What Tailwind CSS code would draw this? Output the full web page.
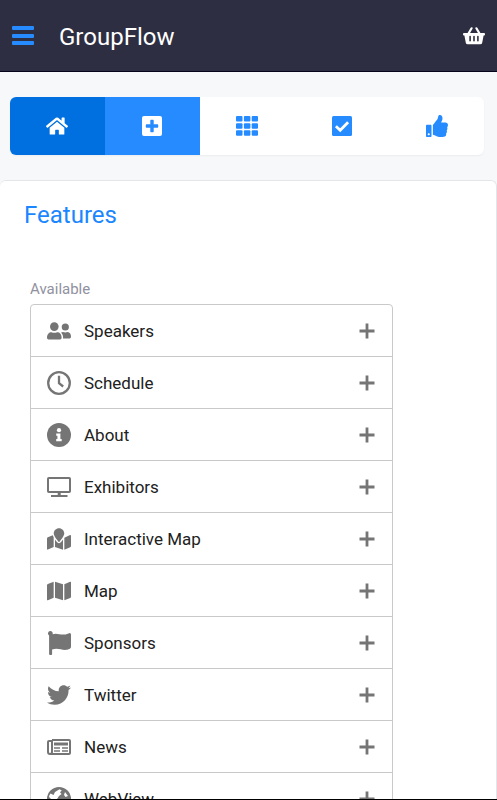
<!DOCTYPE html>
<html lang="en">
<head>
  <meta charset="UTF-8" />
  <meta name="viewport" content="width=device-width, initial-scale=1.0"/>
  <title>GroupFlow</title>
  <script src="https://cdn.jsdelivr.net/npm/@tailwindcss/browser@4"></script>
</head>
<body class="h-screen flex flex-col overflow-hidden bg-[#f6f8fa] border-b border-black font-['Roboto',sans-serif] text-[#212121]">

  <!-- Header -->
  <header class="flex items-center shrink-0 h-18 px-3 bg-[#2e2e42] border-b border-[#05041a]">
    <button type="button" aria-label="Menu" class="text-[#268bff]">
      <svg class="w-[22px] h-5" viewBox="0 0 22 20" fill="currentColor"><rect y="0" width="22" height="4" rx="1"/><rect y="8" width="22" height="4" rx="1"/><rect y="15" width="22" height="4" rx="1"/></svg>
    </button>
    <h1 class="ml-[25px] pt-0.5 text-2xl text-white">GroupFlow</h1>
    <a href="#cart" aria-label="Basket" class="ml-auto text-white">
      <svg class="w-[22px] h-5" viewBox="0 0 22 20" fill="currentColor">
        <path fill-rule="evenodd" d="M1 7h20q1 0 1 1v.6q0 .9-1 .9h-.4l-1.4 7.2q-.3 1.6-2 1.6H4.8q-1.7 0-2-1.6L1.4 9.5H1q-1 0-1-.9V8q0-1 1-1zM6.300 10.600v4.200q0 .8.8.8t.8-.8v-4.200q0-.8-.8-.8t-.8.8zM10.200 10.600v4.200q0 .8.8.8t.8-.8v-4.200q0-.8-.8-.8t-.8.8zM14.100 10.600v4.200q0 .8.8.8t.8-.8v-4.200q0-.8-.8-.8t-.8.8z"/>
        <path d="M5.500 7.500L8.600 2.300M16.500 7.500L13.400 2.300" stroke="currentColor" stroke-width="2.200" stroke-linecap="round"/>
      </svg>
    </a>
  </header>

  <!-- Steps -->
  <nav class="flex shrink-0 h-[58px] mt-[25px] ml-2.5 mr-[13px] rounded-md overflow-hidden bg-white text-[#268bff] shadow-xs">
    <a href="#home" aria-label="Home" class="flex-1 flex items-center justify-center bg-[#0070e0] text-white">
      <svg class="w-[22px] h-5" viewBox="0 0 576 512" fill="currentColor"><path d="M280.370 148.260L96 300.110V464a16 16 0 0 0 16 16l112.060-.29a16 16 0 0 0 15.920-16V368a16 16 0 0 1 16-16h64a16 16 0 0 1 16 16v95.640a16 16 0 0 0 16 16.050L464 480a16 16 0 0 0 16-16V300L295.670 148.260a12.190 12.190 0 0 0-15.300 0zM571.600 251.470L488 182.560V44.050a12 12 0 0 0-12-12h-56a12 12 0 0 0-12 12v72.610L318.470 43a48 48 0 0 0-61 0L4.340 251.470a12 12 0 0 0-1.600 16.900l25.500 31A12 12 0 0 0 45.150 301l235.220-193.740a12.190 12.190 0 0 1 15.300 0L530.900 301a12 12 0 0 0 16.900-1.600l25.500-31a12 12 0 0 0-1.700-16.930z"/></svg>
    </a>
    <a href="#features" aria-label="Features" class="flex-1 flex items-center justify-center bg-[#268bff] text-white">
      <svg class="w-5 h-5" viewBox="0 0 20 20" fill="currentColor"><path fill-rule="evenodd" d="M2 0h16q2 0 2 2v16q0 2-2 2H2q-2 0-2-2V2q0-2 2-2zM8.300 4.500v3.800H4.500q-.7 0-.7.7v2q0 .7.7.7h3.800v3.800q0 .7.7.7h2q.7 0 .7-.7v-3.800h3.800q.7 0 .7-.7V9q0-.7-.7-.7h-3.800V4.500q0-.7-.7-.7H9q-.7 0-.7.7z"/></svg>
    </a>
    <a href="#modules" aria-label="Modules" class="flex-1 flex items-center justify-center">
      <svg class="w-[22px] h-5" viewBox="0 0 22 20" fill="currentColor">
        <rect width="6.500" height="5.500" rx="1"/><rect x="7.900" width="6.500" height="5.500" rx="1"/><rect x="15.700" width="6.300" height="5.500" rx="1"/>
        <rect y="7.200" width="6.500" height="5.500" rx="1"/><rect x="7.900" y="7.200" width="6.500" height="5.500" rx="1"/><rect x="15.700" y="7.200" width="6.300" height="5.500" rx="1"/>
        <rect y="14.300" width="6.500" height="5.500" rx="1"/><rect x="7.900" y="14.300" width="6.500" height="5.500" rx="1"/><rect x="15.700" y="14.300" width="6.300" height="5.500" rx="1"/>
      </svg>
    </a>
    <a href="#review" aria-label="Review" class="flex-1 flex items-center justify-center">
      <svg class="w-5 h-5" viewBox="0 0 20 20"><rect width="20" height="20" rx="1.500" fill="currentColor"/><path d="M3.900 10.200l4.300 4 7.900-8" fill="none" stroke="white" stroke-width="2.800"/></svg>
    </a>
    <a href="#finish" aria-label="Finish" class="flex-1 flex items-center justify-center">
      <svg class="w-[22px] h-[22px]" viewBox="0 0 512 512" fill="currentColor"><path d="M104 224H24c-13.255 0-24 10.745-24 24v240c0 13.255 10.745 24 24 24h80c13.255 0 24-10.745 24-24V248c0-13.255-10.745-24-24-24zM64 472c-13.255 0-24-10.745-24-24s10.745-24 24-24 24 10.745 24 24-10.745 24-24 24zM384 81.452c0 42.416-25.970 66.208-33.277 94.548h101.723c33.397 0 59.397 27.746 59.553 58.098.084 17.938-7.546 37.249-19.439 49.197l-.11.11c9.836 23.337 8.237 56.037-9.308 79.469 8.681 25.895-.069 57.704-16.382 74.757 4.298 17.598 2.244 32.575-6.148 44.632C440.202 511.587 389.616 512 346.839 512l-2.845-.001c-48.287-.017-87.806-17.598-119.560-31.725-15.957-7.099-36.821-15.887-52.651-16.178-6.540-.12-11.783-5.457-11.783-11.998v-213.770c0-3.200 1.282-6.271 3.558-8.521 39.614-39.144 56.648-80.587 89.117-113.111 14.804-14.832 20.188-37.236 25.393-58.902C282.515 39.293 291.817 0 312 0c24 0 72 8 72 81.452z"/></svg>
    </a>
  </nav>

  <!-- Features card -->
  <main class="flex-1 min-h-0 mt-[25px] overflow-hidden rounded-t-md bg-white border-t border-r border-[#e3e6e8]">
    <h2 class="mt-[18px] ml-6 text-2xl text-[#1a86ff]">Features</h2>
    <section class="mt-12 px-[30px]">
      <h3 class="text-[15px] leading-5 text-[#9191a0]">Available</h3>
      <ul class="mt-[5px] w-5/6 rounded border border-[#c9c9c9] divide-y divide-[#c9c9c9] text-[17px] text-[#757575]">
        <li class="flex items-center h-[52px] pl-4 pr-[17px]">
          <svg class="w-6 h-6" viewBox="0 0 24 24" fill="currentColor"><circle cx="7.300" cy="7.600" r="4.300"/><circle cx="18.300" cy="8" r="3.600"/><path d="M0 18.800c0-3.600 2-5.600 4.500-5.600q2.800 1.100 5.600 0c2.600 0 4.500 2 4.500 5.600q0 1.600-1.500 1.600H1.500Q0 20.400 0 18.800zM14 13.700q1-.7 2-.7 2.300.9 4.600 0c2.200.2 3.400 2 3.400 4.600q0 1.900-1.300 1.900H16c.4-2.500-.4-4.500-2-5.800z"/></svg>
          <span class="ml-[13px] pt-0.5 text-[#212121]">Speakers</span>
          <button type="button" aria-label="Add Speakers" class="ml-auto"><svg class="w-4 h-4" viewBox="0 0 16 16" stroke="currentColor" stroke-width="2.800"><path d="M8 .5v15M.5 8h15"/></svg></button>
        </li>
        <li class="flex items-center h-[52px] pl-4 pr-[17px]">
          <svg class="w-6 h-6" viewBox="0 0 24 24" fill="none" stroke="currentColor" stroke-width="2.300"><circle cx="12" cy="12" r="10.800"/><path d="M12 4.800v7.400l4.200 3.300"/></svg>
          <span class="ml-[13px] pt-0.5 text-[#212121]">Schedule</span>
          <button type="button" aria-label="Add Schedule" class="ml-auto"><svg class="w-4 h-4" viewBox="0 0 16 16" stroke="currentColor" stroke-width="2.800"><path d="M8 .5v15M.5 8h15"/></svg></button>
        </li>
        <li class="flex items-center h-[52px] pl-4 pr-[17px]">
          <svg class="w-6 h-6" viewBox="0 0 24 24"><circle cx="12" cy="12" r="12" fill="currentColor"/><circle cx="12" cy="7.200" r="2.100" fill="white"/><path d="M9.200 10.400h4.200v5.500h1.300v2.300H9.200v-2.300h1.200v-3.200H9.200z" fill="white"/></svg>
          <span class="ml-[13px] pt-0.5 text-[#212121]">About</span>
          <button type="button" aria-label="Add About" class="ml-auto"><svg class="w-4 h-4" viewBox="0 0 16 16" stroke="currentColor" stroke-width="2.800"><path d="M8 .5v15M.5 8h15"/></svg></button>
        </li>
        <li class="flex items-center h-[52px] pl-4 pr-[17px]">
          <svg class="w-6 h-6" viewBox="0 0 24 24" fill="none" stroke="currentColor" stroke-width="2"><rect x="1" y="3" width="22" height="14" rx=".8"/><path d="M4 21h16.500"/><path d="M12.200 17v4" stroke-width="3"/></svg>
          <span class="ml-[13px] pt-0.5 text-[#212121]">Exhibitors</span>
          <button type="button" aria-label="Add Exhibitors" class="ml-auto"><svg class="w-4 h-4" viewBox="0 0 16 16" stroke="currentColor" stroke-width="2.800"><path d="M8 .5v15M.5 8h15"/></svg></button>
        </li>
        <li class="flex items-center h-[52px] pl-4 pr-[17px]">
          <svg class="w-6 h-6" viewBox="0 0 576 512" fill="currentColor"><path d="M288 0c-69.590 0-126 56.410-126 126 0 56.260 82.350 158.800 113.900 196.020 6.390 7.540 17.820 7.540 24.200 0C331.650 284.800 414 182.260 414 126 414 56.410 357.590 0 288 0zM20.120 215.950A32.006 32.006 0 0 0 0 245.660v250.320c0 11.320 11.430 19.060 21.940 14.860L160 448V214.920c-8.840-15.980-16.070-31.540-21.250-46.420L20.120 215.950zM288 359.670c-14.070 0-27.380-6.180-36.510-16.960-19.660-23.200-40.570-49.620-59.490-76.720v182l192 64V266c-18.920 27.090-39.820 53.520-59.490 76.720-9.130 10.770-22.440 16.950-36.510 16.950zM554.060 161.160L416 224v288l139.880-55.950A31.996 31.996 0 0 0 576 426.340V176.020c0-11.320-11.430-19.060-21.940-14.860z"/></svg>
          <span class="ml-[13px] pt-0.5 text-[#212121]">Interactive Map</span>
          <button type="button" aria-label="Add Interactive Map" class="ml-auto"><svg class="w-4 h-4" viewBox="0 0 16 16" stroke="currentColor" stroke-width="2.800"><path d="M8 .5v15M.5 8h15"/></svg></button>
        </li>
        <li class="flex items-center h-[52px] pl-4 pr-[17px]">
          <svg class="w-6 h-6" viewBox="0 0 576 512" fill="currentColor"><path d="M0 117.660v346.320c0 11.320 11.430 19.060 21.940 14.860L160 416V32L20.120 87.950A32.006 32.006 0 0 0 0 117.660zM192 416l192 64V96L192 32v384zM554.060 33.160L416 96v384l139.880-55.950A31.996 31.996 0 0 0 576 394.340V48.020c0-11.320-11.430-19.060-21.940-14.860z"/></svg>
          <span class="ml-[13px] pt-0.5 text-[#212121]">Map</span>
          <button type="button" aria-label="Add Map" class="ml-auto"><svg class="w-4 h-4" viewBox="0 0 16 16" stroke="currentColor" stroke-width="2.800"><path d="M8 .5v15M.5 8h15"/></svg></button>
        </li>
        <li class="flex items-center h-[52px] pl-4 pr-[17px]">
          <svg class="w-6 h-6" viewBox="0 0 24 24" fill="currentColor"><path d="M3.200 0a2.500 2.500 0 0 1 2.400 3.300c5-2.200 8.600 2.200 15.900-.9q2.500-1 2.500 1.200v12.200q0 1.400-1.200 2c-6.700 3.300-10.700-1.800-17.700.8V23q0 1-1 1h-1q-1 0-1-1V4.600A2.500 2.500 0 0 1 3.200 0z"/></svg>
          <span class="ml-[13px] pt-0.5 text-[#212121]">Sponsors</span>
          <button type="button" aria-label="Add Sponsors" class="ml-auto"><svg class="w-4 h-4" viewBox="0 0 16 16" stroke="currentColor" stroke-width="2.800"><path d="M8 .5v15M.5 8h15"/></svg></button>
        </li>
        <li class="flex items-center h-[52px] pl-4 pr-[17px]">
          <svg class="w-6 h-6" viewBox="0 0 512 512" fill="currentColor"><path d="M459.370 151.716c.325 4.548.325 9.097.325 13.645 0 138.720-105.583 298.558-298.558 298.558-59.452 0-114.680-17.219-161.137-47.106 8.447.974 16.568 1.299 25.340 1.299 49.055 0 94.213-16.568 130.274-44.832-46.132-.975-84.792-31.188-98.112-72.772 6.498.974 12.995 1.624 19.818 1.624 9.421 0 18.843-1.300 27.614-3.573-48.081-9.747-84.143-51.980-84.143-102.985v-1.299c13.969 7.797 30.214 12.670 47.431 13.319-28.264-18.843-46.781-51.005-46.781-87.391 0-19.492 5.197-37.360 14.294-52.954 51.655 63.675 129.300 105.258 216.365 109.807-1.624-7.797-2.599-15.918-2.599-24.040 0-57.828 46.782-104.934 104.934-104.934 30.213 0 57.502 12.670 76.670 33.137 23.715-4.548 46.456-13.320 66.599-25.340-7.798 24.366-24.366 44.833-46.132 57.827 21.117-2.273 41.584-8.122 60.426-16.243-14.292 20.791-32.161 39.308-52.628 54.253z"/></svg>
          <span class="ml-[13px] pt-0.5 text-[#212121]">Twitter</span>
          <button type="button" aria-label="Add Twitter" class="ml-auto"><svg class="w-4 h-4" viewBox="0 0 16 16" stroke="currentColor" stroke-width="2.800"><path d="M8 .5v15M.5 8h15"/></svg></button>
        </li>
        <li class="flex items-center h-[52px] pl-4 pr-[17px]">
          <svg class="w-6 h-6" viewBox="0 0 24 24" fill="none" stroke="currentColor" stroke-width="2"><path d="M5 5h17q1 0 1 1v12q0 1-1 1H3q-2 0-2-2V7q0-1 1-1h2M5 5v12q0 2-2 2"/><path d="M7 9h14" stroke-width="3"/><path d="M7 13h6M15 13h6M7 16h6M15 16h6" stroke-width="1.500"/></svg>
          <span class="ml-[13px] pt-0.5 text-[#212121]">News</span>
          <button type="button" aria-label="Add News" class="ml-auto"><svg class="w-4 h-4" viewBox="0 0 16 16" stroke="currentColor" stroke-width="2.800"><path d="M8 .5v15M.5 8h15"/></svg></button>
        </li>
        <li class="flex items-center h-[52px] pl-4 pr-[17px]">
          <svg class="w-6 h-6" viewBox="0 0 24 24"><circle cx="12" cy="12" r="12" fill="currentColor"/><path d="M12.500 2.200l2.300 1.300-1.800 1.800 1.500 1.700-2.500 2-2 3 3 1.500 1 3-2.500 5.500C7 20 9 16 6 14L2 10q0-2 1.500-3.500l3 1.500 1.500-3zM18 5l3 4-2.500 1-1.500-2z" fill="white"/></svg>
          <span class="ml-[13px] pt-0.5 text-[#212121]">WebView</span>
          <button type="button" aria-label="Add WebView" class="ml-auto"><svg class="w-4 h-4" viewBox="0 0 16 16" stroke="currentColor" stroke-width="2.800"><path d="M8 .5v15M.5 8h15"/></svg></button>
        </li>
      </ul>
    </section>
  </main>
</body>
</html>
